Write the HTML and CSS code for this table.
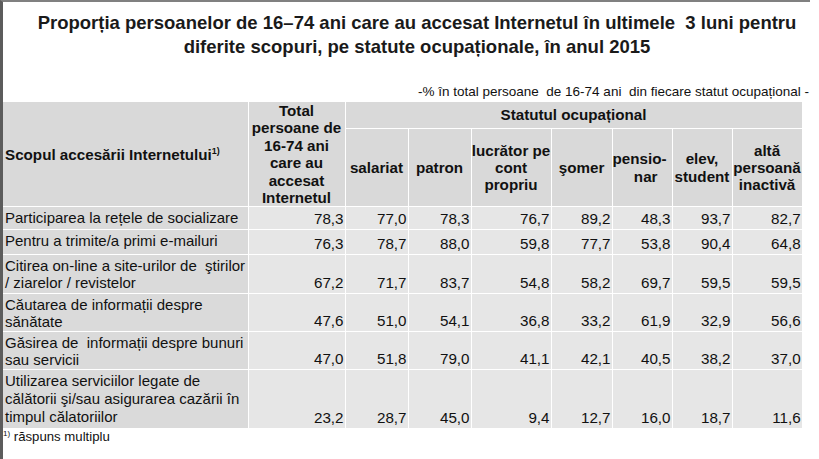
FILE: index.html
```html
<!DOCTYPE html>
<html lang="ro">
<head>
<meta charset="utf-8">
<title>Proporția persoanelor</title>
<link rel="stylesheet" href="styles.css">
</head>
<body>
<div class="page">
  <h1 class="title">Proporția persoanelor de 16–74 ani care au accesat Internetul în ultimele&nbsp; 3 luni pentru<br>diferite scopuri, pe statute ocupaționale, în anul 2015</h1>
  <p class="unit">-% în total persoane&nbsp; de 16-74 ani&nbsp; din fiecare statut ocupațional -</p>
  <table class="data">
    <colgroup>
      <col class="c-label">
      <col class="c-total">
      <col class="c-sal">
      <col class="c-pat">
      <col class="c-luc">
      <col class="c-som">
      <col class="c-pen">
      <col class="c-elev">
      <col class="c-alta">
    </colgroup>
    <thead>
      <tr class="hrow1">
        <th rowspan="2" class="h-label">Scopul accesării Internetului<sup>1)</sup></th>
        <th rowspan="2" class="h-total">Total persoane de 16-74&nbsp;ani care au accesat Internetul</th>
        <th colspan="7" class="h-group">Statutul ocupațional</th>
      </tr>
      <tr class="hrow2">
        <th>salariat</th>
        <th>patron</th>
        <th>lucrător pe cont propriu</th>
        <th>şomer</th>
        <th class="h-pen">pensio-<br>nar</th>
        <th>elev, student</th>
        <th>altă persoană inactivă</th>
      </tr>
    </thead>
    <tbody>
      <tr class="row-1">
        <td class="label">Participarea la rețele de socializare</td>
        <td>78,3</td><td>77,0</td><td>78,3</td><td>76,7</td><td>89,2</td><td>48,3</td><td>93,7</td><td>82,7</td>
      </tr>
      <tr class="row-2">
        <td class="label">Pentru a trimite/a primi e-mailuri</td>
        <td>76,3</td><td>78,7</td><td>88,0</td><td>59,8</td><td>77,7</td><td>53,8</td><td>90,4</td><td>64,8</td>
      </tr>
      <tr class="row-3">
        <td class="label">Citirea on-line a site-urilor de&nbsp; ştirilor / ziarelor / revistelor</td>
        <td>67,2</td><td>71,7</td><td>83,7</td><td>54,8</td><td>58,2</td><td>69,7</td><td>59,5</td><td>59,5</td>
      </tr>
      <tr class="row-4">
        <td class="label">Căutarea de informații despre sănătate</td>
        <td>47,6</td><td>51,0</td><td>54,1</td><td>36,8</td><td>33,2</td><td>61,9</td><td>32,9</td><td>56,6</td>
      </tr>
      <tr class="row-5">
        <td class="label">Găsirea de&nbsp; informații despre bunuri sau servicii</td>
        <td>47,0</td><td>51,8</td><td>79,0</td><td>41,1</td><td>42,1</td><td>40,5</td><td>38,2</td><td>37,0</td>
      </tr>
      <tr class="row-6">
        <td class="label">Utilizarea serviciilor legate de călătorii şi/sau asigurarea cazării în timpul călatoriilor</td>
        <td>23,2</td><td>28,7</td><td>45,0</td><td>9,4</td><td>12,7</td><td>16,0</td><td>18,7</td><td>11,6</td>
      </tr>
    </tbody>
  </table>
  <p class="note"><sup>1)</sup> răspuns multiplu</p>
</div>
</body>
</html>
```

FILE: styles.css
```css
html, body {
  margin: 0;
  padding: 0;
  background: #ffffff;
}

body {
  font-family: "Liberation Sans", Arial, sans-serif;
  color: #111111;
}

.page {
  width: 807px;
  min-height: 457px;
  border-left: 3px solid #5c5c5c;
  border-top: 2px solid #808080;
}

.title {
  margin: 0;
  padding-top: 9px;
  padding-left: 21px;
  font-size: 18.5px;
  line-height: 24px;
  font-weight: bold;
  text-align: center;
  color: #1a1a1a;
}

.unit {
  margin: 0 0 2px;
  padding-top: 25px;
  padding-right: 1px;
  text-align: right;
  font-size: 13.5px;
  line-height: 16px;
}

.data {
  border-collapse: collapse;
  table-layout: fixed;
  width: 799px;
  font-size: 15px;
  line-height: 17px;
}

.c-label { width: 245px; }
.c-total { width: 97px; }
.c-sal { width: 63px; }
.c-pat { width: 63px; }
.c-luc { width: 80px; }
.c-som { width: 61px; }
.c-pen { width: 60px; }
.c-elev { width: 60px; }
.c-alta { width: 70px; }

.data th,
.data td {
  border: 1px solid #ffffff;
}

.data th {
  background: #d9d9d9;
  font-size: 15.2px;
  line-height: 17.4px;
  font-weight: bold;
  text-align: center;
  vertical-align: middle;
  padding: 0;
}

.data tr:first-child th {
  border-top: none;
}

.data th:first-child,
.data td:first-child {
  border-left: none;
}

.data .h-label {
  text-align: left;
  padding-left: 2px;
}

.data .h-label sup {
  font-size: 9px;
  line-height: 0;
}

.hrow1 th {
  height: 26px;
}

.hrow2 th {
  height: 77px;
}

.data .h-pen {
  text-align: right;
  padding-right: 14px;
}

.data td {
  background: #e6e6e6;
  text-align: right;
  vertical-align: bottom;
  padding: 0 1px 2px 2px;
  font-size: 15.2px;
}

.data td.label {
  background: #dadada;
  text-align: left;
  vertical-align: top;
  padding: 2px 0 0 2px;
  font-size: 15px;
}

.data tbody tr:last-child td {
  border-bottom: none;
}

.row-1 { height: 23px; }
.row-2 { height: 25px; }
.row-3 { height: 39px; }
.row-4 { height: 38px; }
.row-5 { height: 38px; }
.row-6 { height: 58px; }

.row-6 td.label {
  line-height: 17.7px;
}

.note {
  margin: 0;
  padding-top: 1px;
  font-size: 13.2px;
  line-height: 15px;
}

.note sup {
  font-size: 8px;
  line-height: 0;
}
```
